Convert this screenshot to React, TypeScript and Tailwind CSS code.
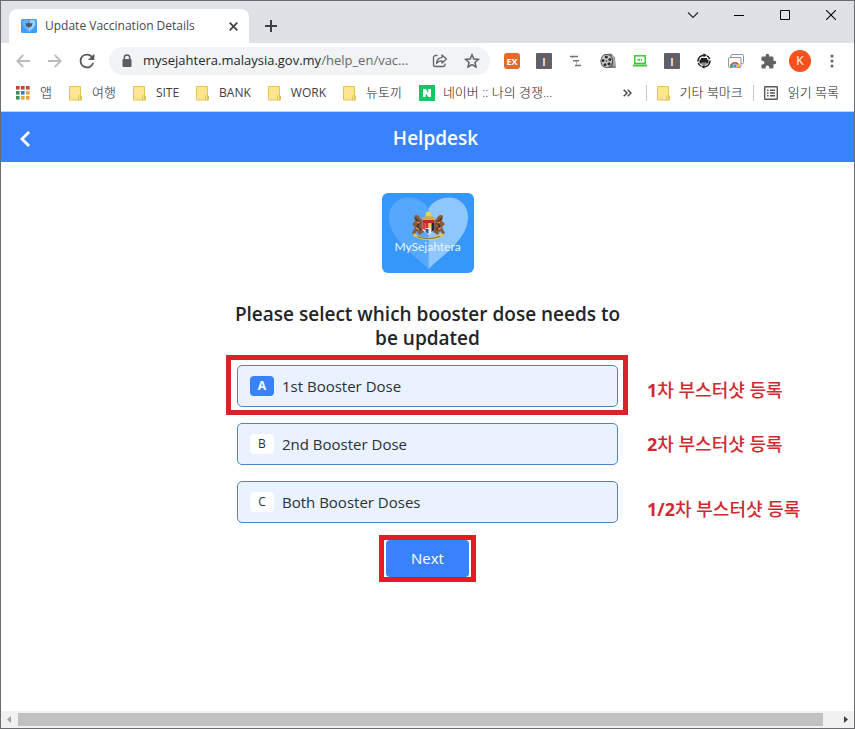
import { useState } from 'react';
import type { ReactNode } from 'react';

const options = [
  { key: 'A', label: '1st Booster Dose' },
  { key: 'B', label: '2nd Booster Dose' },
  { key: 'C', label: 'Both Booster Doses' },
];

const folders = [
  { name: '여행', korean: true },
  { name: 'SITE' },
  { name: 'BANK' },
  { name: 'WORK' },
  { name: '뉴토끼', korean: true },
];

function WindowButton({ label, children }: { label: string; children: ReactNode }) {
  return (
    <button aria-label={label} className="flex h-7 w-[46px] items-center justify-center">
      {children}
    </button>
  );
}

function ToolButton({ label, children }: { label: string; children: ReactNode }) {
  return (
    <button aria-label={label} className="flex size-8 shrink-0 items-center justify-center">
      {children}
    </button>
  );
}

function FolderIcon() {
  return (
    <svg width="13" height="15" viewBox="0 0 13 15" className="shrink-0">
      <path d="M.5.5h11v9.5h1v4H.5z" fill="#fde68f" stroke="#e3c35c" />
      <path d="M9.500 14v-3.500q0-1 1-1h1V14z" fill="#fde68f" stroke="#e3c35c" />
    </svg>
  );
}

function AppsIcon() {
  const colors = ['#c5443a', '#c5443a', '#b5503e', '#3f8f58', '#3b78c9', '#dda73a', '#3f8f58', '#dda73a', '#dda73a'];
  return (
    <svg width="14" height="14" viewBox="0 0 14 14" className="shrink-0">
      {colors.map((c, i) => (
        <rect key={i} x={(i % 3) * 5} y={Math.floor(i / 3) * 5} width="3.6" height="3.6" fill={c} />
      ))}
    </svg>
  );
}

function Favicon() {
  return (
    <svg width="16" height="16" viewBox="0 0 16 16" className="shrink-0">
      <rect y="1" width="16" height="14" rx="1.5" fill="#3f9df5" />
      <path d="M8 14C4 10.500 1.500 8.500 1.500 5.500A3 3 0 0 1 8 4.500z" fill="#65b2fa" />
      <path d="M8 14c4-3.500 6.500-5.500 6.500-8.500A3 3 0 0 0 8 4.500z" fill="#9ccdfc" />
      <path d="M4.500 5l2 .5L8 4l1.500 1.500 2-.5-.8 3.200L8 9.500 5.300 8.200z" fill="#5c5560" />
    </svg>
  );
}

function LetterIcon() {
  return (
    <span className="flex size-4 items-center justify-center rounded-[1px] bg-[#606066] text-[11px] leading-none font-semibold text-white">
      I
    </span>
  );
}

function BrowserTabs() {
  return (
    <div className="flex h-[42px] bg-[#dee1e6]">
      <div className="flex flex-1 items-end pl-2">
        <div className="flex h-[34px] w-60 items-center rounded-t-lg bg-white pr-2 pl-3">
          <Favicon />
          <span className="ml-2 flex-1 truncate text-[12px] text-[#45494d]">Update Vaccination Details</span>
          <button aria-label="Close tab" className="flex size-4 items-center justify-center">
            <svg width="9" height="9" viewBox="0 0 9 9" stroke="#3c4043" strokeWidth="1.7">
              <path d="M.7.7l7.600 7.600M8.300.7L.7 8.300" />
            </svg>
          </button>
        </div>
        <button aria-label="New tab" className="ml-2 flex h-[34px] w-7 items-center justify-center">
          <svg width="12" height="12" viewBox="0 0 12 12" stroke="#3c4043" strokeWidth="2">
            <path d="M6 0v12M0 6h12" />
          </svg>
        </button>
      </div>
      <WindowButton label="Search tabs">
        <svg width="12" height="12" viewBox="0 0 12 12" fill="none" stroke="#222" strokeWidth="1.100">
          <path d="M1 3.500l5 5 5-5" />
        </svg>
      </WindowButton>
      <WindowButton label="Minimize">
        <svg width="10" height="10" viewBox="0 0 10 10" fill="none" stroke="#000">
          <path d="M0 5.500h10" />
        </svg>
      </WindowButton>
      <WindowButton label="Maximize">
        <svg width="10" height="10" viewBox="0 0 10 10" fill="none" stroke="#000">
          <path d="M.5.5h9v9h-9z" />
        </svg>
      </WindowButton>
      <WindowButton label="Close">
        <svg width="10" height="10" viewBox="0 0 10 10" fill="none" stroke="#000" strokeWidth="1.100">
          <path d="M0 0l10 10M10 0L0 10" />
        </svg>
      </WindowButton>
    </div>
  );
}

function Toolbar() {
  return (
    <div className="flex h-9 items-center px-[6px]">
      <ToolButton label="Back">
        <svg width="14" height="14" viewBox="0 0 14 14" fill="none" stroke="#babcbe" strokeWidth="1.800">
          <path d="M14 7H1.500M7.300 1L1.300 7l6 6" />
        </svg>
      </ToolButton>
      <ToolButton label="Forward">
        <svg width="14" height="14" viewBox="0 0 14 14" fill="none" stroke="#babcbe" strokeWidth="1.800">
          <path d="M0 7h12.500M6.700 1l6 6-6 6" />
        </svg>
      </ToolButton>
      <ToolButton label="Reload">
        <svg width="22" height="22" viewBox="0 0 24 24" fill="#55585c">
          <path d="M17.650 6.350A7.960 7.960 0 0 0 12 4a8 8 0 1 0 7.730 10h-2.080A6 6 0 1 1 12 6c1.660 0 3.140.69 4.220 1.780L13 11h7V4z" />
        </svg>
      </ToolButton>
      <div className="mx-[6px] flex h-7 min-w-0 flex-1 items-center rounded-full bg-[#f1f3f4] pr-1 pl-3">
        <svg width="12" height="14" viewBox="0 0 12 14" className="shrink-0">
          <path d="M3.300 6V3.700a2.700 2.700 0 0 1 5.400 0V6" fill="none" stroke="#5a5d61" strokeWidth="1.500" />
          <rect x="1.500" y="5" width="9" height="8" rx="1" fill="#5a5d61" />
        </svg>
        <span className="ml-[10px] flex-1 truncate text-[13px] text-[#65696e]">
          <span className="text-[#25282c]">mysejahtera.malaysia.gov.my</span>/help_en/vac...
        </span>
        <button aria-label="Share this page" className="flex w-7 shrink-0 justify-center">
          <svg width="16" height="16" viewBox="0 0 16 16" fill="none" stroke="#5f6368" strokeWidth="1.300" strokeLinejoin="round">
            <path d="M5.500 2.500H3.500a2 2 0 0 0-2 2v7a2 2 0 0 0 2 2h7.500a2 2 0 0 0 2-2v-1" />
            <path d="M10 2l4.500 4L10 10V7.800c-2.600 0-4.300.8-5.500 2.700.3-3.400 2.200-5.700 5.500-6.200z" />
          </svg>
        </button>
        <button aria-label="Bookmark this tab" className="ml-1 flex w-7 shrink-0 justify-center">
          <svg width="16" height="16" viewBox="0 0 16 16" fill="none" stroke="#5f6368" strokeWidth="1.500">
            <path d="M8 1.800l1.850 4.200 4.550.4-3.450 3 1.050 4.500L8 11.500l-4 2.400 1.050-4.500-3.450-3L6.150 6z" />
          </svg>
        </button>
      </div>
      <ToolButton label="EX extension">
        <span className="flex size-4 items-center justify-center rounded-[3px] bg-[#e5692b] text-[9px] leading-none font-bold text-white">
          EX
        </span>
      </ToolButton>
      <ToolButton label="I extension">
        <LetterIcon />
      </ToolButton>
      <ToolButton label="Outline extension">
        <svg width="12" height="12" viewBox="0 0 12 12" stroke="#707276" strokeWidth="1.400">
          <path d="M0 1.500h8M3 5.800h6M5 10.500h6" />
          <path d="M2.500 1.500v2M6.500 6v4" strokeWidth=".5" />
        </svg>
      </ToolButton>
      <ToolButton label="Film extension">
        <svg width="16" height="16" viewBox="0 0 16 16">
          <path d="M4 1.500L11 .5l4 4 .8 10.500h-3L8 15z" fill="#77797b" />
          <path d="M11.500 3l2.500 2v8.500" fill="none" stroke="#bbb" strokeWidth="1.200" />
          <ellipse cx="6.600" cy="8" rx="6.200" ry="7" fill="#444" />
          <ellipse cx="6.600" cy="8" rx="5.400" ry="6.200" fill="#c9c9c9" />
          <g fill="#2c2c2c">
            <circle cx="6.300" cy="4" r="1.600" />
            <circle cx="9.900" cy="6.400" r="1.500" />
            <circle cx="9" cy="10.800" r="1.600" />
            <circle cx="5" cy="11.700" r="1.500" />
            <circle cx="3" cy="7.600" r="1.500" />
            <circle cx="6.500" cy="8" r=".8" />
          </g>
        </svg>
      </ToolButton>
      <ToolButton label="Laptop extension">
        <svg width="14" height="12" viewBox="0 0 14 12" fill="none" stroke="#3fc634">
          <rect x="1.800" y=".8" width="10.400" height="7.600" strokeWidth="1.500" />
          <path d="M0 10.500h14" strokeWidth="2" />
          <path d="M5 6V3.800L6.500 5.500V3.800M8.500 6V3.800" strokeWidth="1" />
        </svg>
      </ToolButton>
      <ToolButton label="I extension">
        <LetterIcon />
      </ToolButton>
      <ToolButton label="Print extension">
        <svg width="16" height="16" viewBox="0 0 16 16">
          <path d="M2 8.500A6 6 0 0 1 8 2.200M14 7.500a6 6 0 0 1-6 6.300M11 2.800a6 6 0 0 1 2.800 3.200M5 13.200a6 6 0 0 1-2.800-3.200" fill="none" stroke="#222" strokeWidth="1.500" />
          <path d="M7.500.3l3.500 2-3.500 2zM8.500 15.700l-3.500-2 3.500-2z" fill="#222" />
          <path d="M5 5h6v1.500h1.500v4h-9v-4H5z" fill="#222" />
          <path d="M5.500 9.500h5V12h-5z" fill="#8c8c8c" />
        </svg>
      </ToolButton>
      <ToolButton label="Gallery extension">
        <svg width="16" height="14" viewBox="0 0 16 14">
          <rect x="3" y=".5" width="12.500" height="9" rx="1" fill="#fff" stroke="#909295" />
          <rect x=".5" y="3.500" width="12.500" height="10" rx="1" fill="#fff" stroke="#909295" />
          <path d="M2 13a5 5 0 0 1 10 0z" fill="#e04a3c" />
          <path d="M2 13a5 5 0 0 1 1.500-3.500L6 13z" fill="#3aa757" />
          <path d="M12 13a5 5 0 0 0-1.700-3.600L8 13z" fill="#f6bf26" />
          <circle cx="7" cy="12" r="2" fill="#4285f4" stroke="#fff" strokeWidth=".6" />
        </svg>
      </ToolButton>
      <ToolButton label="Extensions">
        <svg width="17" height="17" viewBox="0 0 24 24" fill="#5f6368">
          <path d="M20.500 11H19V7a2 2 0 0 0-2-2h-4V3.500a2.500 2.500 0 0 0-5 0V5H4a2 2 0 0 0-2 2v3.800h1.500a2.700 2.700 0 0 1 0 5.400H2V20a2 2 0 0 0 2 2h3.800v-1.500a2.700 2.700 0 0 1 5.400 0V22H17a2 2 0 0 0 2-2v-4h1.500a2.500 2.500 0 0 0 0-5z" />
        </svg>
      </ToolButton>
      <ToolButton label="Profile">
        <span className="flex size-[22px] items-center justify-center rounded-full bg-[#f4511e] text-[12px] leading-none text-white">
          K
        </span>
      </ToolButton>
      <ToolButton label="Menu">
        <svg width="4" height="14" viewBox="0 0 4 14" fill="#5f6368">
          <circle cx="2" cy="2" r="1.500" />
          <circle cx="2" cy="7" r="1.500" />
          <circle cx="2" cy="12" r="1.500" />
        </svg>
      </ToolButton>
    </div>
  );
}

function Bookmark({ icon, korean, children }: { icon: ReactNode; korean?: boolean; children: ReactNode }) {
  return (
    <a href="#" className="flex shrink-0 items-center gap-[10px]">
      {icon}
      <span className={korean ? 'text-[13px] font-light text-[#202124]' : 'text-[12px]'}>{children}</span>
    </a>
  );
}

function BookmarksBar() {
  return (
    <nav className="flex h-[33px] items-center gap-[17px] border-b border-[#b9d6f8] pr-[15px] pb-1 pl-[15px] text-[#3c4043]">
      <Bookmark icon={<AppsIcon />} korean>
        앱
      </Bookmark>
      {folders.map(({ name, korean }) => (
        <Bookmark key={name} icon={<FolderIcon />} korean={korean}>
          {name}
        </Bookmark>
      ))}
      <a href="#" className="flex shrink-0 items-center gap-2">
        <svg width="16" height="16" viewBox="0 0 16 16">
          <rect width="16" height="16" fill="#13c765" />
          <path d="M4 4h2.800l2.500 3.700V4H12v8H9.300L6.700 8.300V12H4z" fill="#fff" />
        </svg>
        <span className="text-[13px] font-light text-[#202124]">네이버 :: 나의 경쟁...</span>
      </a>
      <div className="ml-auto flex shrink-0 items-center gap-[10px]">
        <button aria-label="More bookmarks" className="mr-1 flex">
          <svg width="9" height="8" viewBox="0 0 9 8" fill="none" stroke="#4a4d51" strokeWidth="1.500">
            <path d="M.7.7L4 4 .7 7.300M4.700.7L8 4 4.700 7.300" />
          </svg>
        </button>
        <span className="h-4 w-px bg-[#c4c7cb]" />
        <Bookmark icon={<FolderIcon />} korean>
          기타 북마크
        </Bookmark>
        <span className="h-4 w-px bg-[#c4c7cb]" />
        <Bookmark
          korean
          icon={
            <svg width="14" height="14" viewBox="0 0 14 14" fill="none" stroke="#55585c" strokeWidth="1.400">
              <rect x=".7" y=".7" width="12.600" height="12.600" rx=".5" />
              <path d="M3 4.200h1.600M3 7h1.600M3 9.800h1.600M6 4.200h5M6 7h5M6 9.800h5" />
            </svg>
          }
        >
          읽기 목록
        </Bookmark>
      </div>
    </nav>
  );
}

function Logo() {
  return (
    <svg width="92" height="80" viewBox="0 0 92 80" role="img" aria-label="MySejahtera">
      <rect width="92" height="80" rx="6" fill="#3697fb" />
      <path d="M46.500 76C31 61 7 46 7 24 7 12 16 4.500 26 4.500c9 0 16 4 20.500 11z" fill="#55a8fd" />
      <path d="M46.500 76C62 61 86 46 86 24 86 12 77 4.500 67 4.500c-9 0-16 4-20.500 11z" fill="#8ec6fe" />
      <g>
        <circle cx="46.500" cy="21.500" r="3" fill="#e3d25e" />
        <path d="M40 24.500q6.500-3 13 0l-1 2.500H41z" fill="#c9b03f" />
        <path d="M32 23c2-2 5-1 5.500 1.500L41 28l1 11-5 3-2-4-3 4-2-2 3-6-3-3 3-3z" fill="#8b5a3c" />
        <path d="M61 23c-2-2-5-1-5.500 1.500L52 28l-1 11 5 3 2-4 3 4 2-2-3-6 3-3-3-3z" fill="#8b5a3c" />
        <path d="M33 25l5 5-3 3 4 4M60 25l-5 5 3 3-4 4" fill="none" stroke="#3c2c2b" strokeWidth="1.200" />
        <path d="M35 29l3 1M58 29l-3 1M34 35l3 1M59 35l-3 1" stroke="#e0a04c" strokeWidth="1.300" />
        <path d="M40.500 27h12v10l-6 5-6-5z" fill="#ede5e0" />
        <path d="M40.500 27h12v3h-12z" fill="#c2272d" />
        <path d="M40.500 30h3v7l-3-1z" fill="#d23b3b" />
        <path d="M43.500 30h3v5h-3z" fill="#cc2a2f" />
        <path d="M46.500 30h3v5h-3z" fill="#f4d24a" />
        <path d="M49.500 30h3v7l-3 2z" fill="#26252f" />
        <path d="M43.500 36h3v5l-3-2z" fill="#3457a5" />
        <path d="M32 40q7 5 14.500 4.500T61 40l1 3q-7 4-15.500 4T31 43z" fill="#d8c45c" />
        <path d="M35 43.500q11 4 23 0" fill="none" stroke="#6f7140" strokeWidth=".9" />
      </g>
      <text x="45.500" y="58" textAnchor="middle" fontFamily="Lato, sans-serif" fontSize="12" fill="#e9f5ff">
        MySejahtera
      </text>
    </svg>
  );
}

function BoosterForm() {
  const [selected, setSelected] = useState('A');

  return (
    <form className="flex flex-col items-center" onSubmit={(e) => e.preventDefault()}>
      <fieldset className="w-full">
        <legend className="mb-[15px] w-full">
          <span className="-mx-2 block text-center text-[19px] leading-6 font-semibold text-[#212529]">
            Please select which booster dose needs to be updated
          </span>
        </legend>
        <div className="flex flex-col gap-4">
          {options.map(({ key, label }) => (
            <label
              key={key}
              className="relative flex h-[42px] items-center gap-2 rounded-[5px] border border-[#4a86c5] bg-[#eaf2ff] px-3 text-[15px] text-[#2b3036]"
            >
              <input
                type="radio"
                name="dose"
                value={key}
                checked={selected === key}
                onChange={() => setSelected(key)}
                className="peer sr-only"
              />
              <span className="flex h-5 w-6 items-center justify-center rounded-[4px] bg-white text-[12px] font-medium peer-checked:bg-[#3a82fb] peer-checked:font-bold peer-checked:text-white">
                {key}
              </span>
              {label}
              {key === 'A' && (
                <span className="pointer-events-none absolute -top-[11px] -right-[11px] -bottom-[9px] -left-3 border-5 border-[#dc2229]" />
              )}
            </label>
          ))}
        </div>
      </fieldset>
      <div className="mt-3 border-5 border-[#e31b23] px-[2px]">
        <button type="submit" className="block h-[37px] rounded-[4px] bg-[#3a82fb] px-[25px] text-[15px] text-white">
          Next
        </button>
      </div>
    </form>
  );
}

function Scrollbar() {
  return (
    <div className="flex h-[17px] items-center bg-[#f1f1f1]">
      <svg width="17" height="17" viewBox="0 0 17 17">
        <path d="M10 5v7L6 8.500z" fill="#a3a3a3" />
      </svg>
      <div className="mr-[14px] h-[13px] flex-1 bg-[#c1c1c1]" />
      <svg width="17" height="17" viewBox="0 0 17 17">
        <path d="M7 5v7l4-3.500z" fill="#404040" />
      </svg>
    </div>
  );
}

export default function App() {
  return (
    <div className="flex min-h-screen flex-col border border-[#6c6c70] bg-white font-['Open_Sans','Noto_Sans_CJK_KR',sans-serif]">
      <BrowserTabs />
      <Toolbar />
      <BookmarksBar />
      <header className="flex h-[50px] items-center bg-[#3a82fb] text-white">
        <button aria-label="Go back" className="flex w-12 justify-center pt-1">
          <svg width="12" height="18" viewBox="0 0 12 18" fill="none" stroke="#fff" strokeWidth="2.800">
            <path d="M10 2L3 9l7 7" />
          </svg>
        </button>
        <h1 className="flex-1 pt-0.5 pr-8 text-center text-[19px] leading-6 font-semibold">Helpdesk</h1>
      </header>
      <main className="grid flex-1 grid-cols-[1fr_381px_1fr] content-start pt-[31px]">
        <div className="col-start-2 mb-[29px] flex justify-center">
          <Logo />
        </div>
        <div className="col-start-2">
          <BoosterForm />
        </div>
        <aside className="flex flex-col gap-[30px] pt-[76px] pl-[29px] text-[18px] leading-6 font-medium whitespace-nowrap text-[#cf2a30]">
          <p>
            <b>1</b>차 부스터샷 등록
          </p>
          <p>
            <b>2</b>차 부스터샷 등록
          </p>
          <p className="pt-[11px]">
            <b>1/2</b>차 부스터샷 등록
          </p>
        </aside>
      </main>
      <Scrollbar />
    </div>
  );
}
